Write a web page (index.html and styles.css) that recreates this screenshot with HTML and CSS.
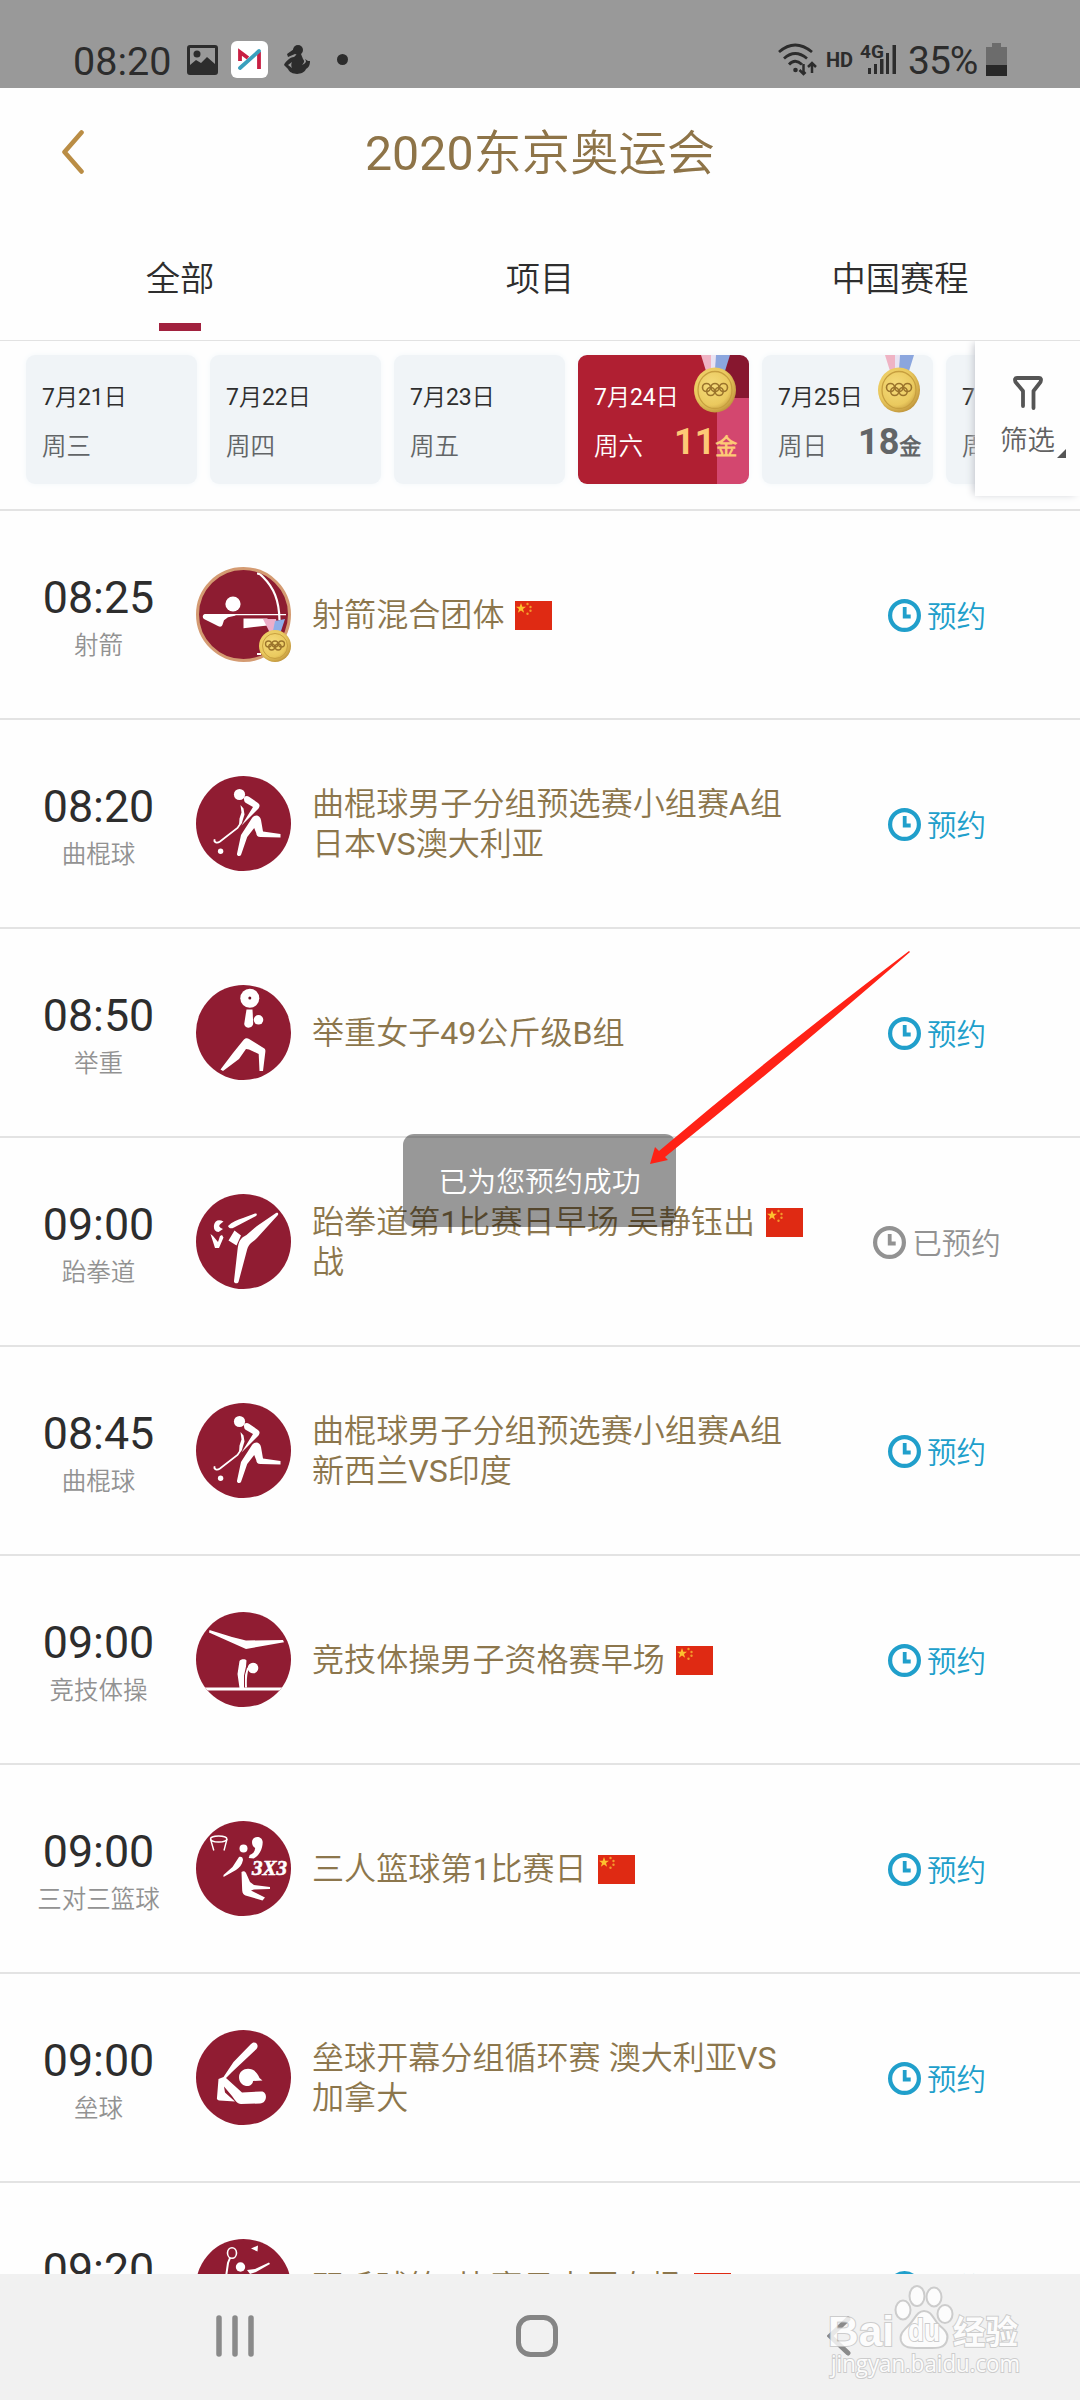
FILE: index.html
```html
<!DOCTYPE html>
<html lang="zh-CN">
<head>
<meta charset="utf-8">
<title>2020东京奥运会</title>
<link rel="stylesheet" href="styles.css">
</head>
<body>
<svg class="defs" width="0" height="0" aria-hidden="true">
  <defs>
    <radialGradient id="gold" cx=".42" cy=".4" r=".62">
      <stop offset="0" stop-color="#f6dc7c"/><stop offset=".7" stop-color="#eac95e"/><stop offset="1" stop-color="#c0953c"/>
    </radialGradient>
    <clipPath id="disc"><circle cx="47.5" cy="47.5" r="47.5"/></clipPath>
    <symbol id="medal" viewBox="0 0 42 58">
      <path d="M7 0h12l2 16h-9z" fill="#efb3c4"/><path d="M21 0h15l-5 16h-11z" fill="#8ba6de"/><path d="M17 0h5l-1 15h-4z" fill="#e9e3f2"/>
      <ellipse cx="21" cy="35" rx="21" ry="22.5" fill="url(#gold)"/>
      <ellipse cx="21" cy="35" rx="17" ry="18.5" fill="none" stroke="#c79f3f" stroke-width="1.3"/>
      <g fill="none" stroke="#9b742c" stroke-width="1.6"><circle cx="12.5" cy="32.5" r="4"/><circle cx="21" cy="32.5" r="4"/><circle cx="29.5" cy="32.5" r="4"/><circle cx="16.7" cy="36.5" r="4"/><circle cx="25.2" cy="36.5" r="4"/></g>
    </symbol>
    <symbol id="flag" viewBox="0 0 37 29">
      <path d="M0 0h37v29H0z" fill="#df2a13"/>
      <path d="M6 2l1.3 3.7h3.7L8 8l1.1 3.8L6 9.5l-3.1 2.3L4 8 1 5.700h3.700z" fill="#fdc02f"/>
      <g fill="#f39a2c"><circle cx="12.500" cy="3" r="1.200"/><circle cx="15.500" cy="6" r="1.200"/><circle cx="15.500" cy="9.800" r="1.200"/><circle cx="12.500" cy="12.800" r="1.200"/></g>
    </symbol>
    <symbol id="clock" viewBox="0 0 33 33">
      <circle cx="16.500" cy="16.500" r="14.400" fill="none" stroke="currentColor" stroke-width="4.200"/>
      <path d="M16.700 8v9.500h6" fill="none" stroke="currentColor" stroke-width="3.800"/>
    </symbol>
    <symbol id="archery" viewBox="0 0 95 95">
      <circle cx="47.500" cy="47.500" r="46" fill="#8d1c31" stroke="#d49b72" stroke-width="3"/>
      <circle cx="37" cy="37" r="7.600" fill="#fff"/>
      <path d="M9 47h33l-3 1.800-7 1.500-4 3-1.500 4.500c-.6 2-2.500 2.200-4 1.500L8 52c-2-1.500-1.500-4.500 1-5zM47.500 51.500h24v7l-24 2.800z" fill="#fff"/>
      <path d="M40 47.700h50" stroke="#fff" stroke-width="1.300"/>
      <path d="M61 6.500c2.500 0 4 1 6 3.500C78 21 83 33 83.500 53M61 87h4" fill="none" stroke="#fff" stroke-width="2.200"/>
      <path d="M67 52h13l2 12-8 2z" fill="#edaec9"/><path d="M79 54l10-2-4 12h-8z" fill="#8eaee8"/>
      <circle cx="79" cy="79" r="16" fill="url(#gold)"/><circle cx="79" cy="79" r="12.500" fill="none" stroke="#c79f3f"/>
      <g fill="none" stroke="#9b742c" stroke-width="1.300"><circle cx="72.500" cy="77" r="3"/><circle cx="79" cy="77" r="3"/><circle cx="85.500" cy="77" r="3"/><circle cx="75.700" cy="80" r="3"/><circle cx="82.200" cy="80" r="3"/></g>
    </symbol>
    <symbol id="hockey" viewBox="0 0 95 95">
      <circle cx="47.500" cy="47.500" r="47.500" fill="#901c32"/>
      <g fill="#fff"><circle cx="43.500" cy="18.500" r="5.600"/><circle cx="24.600" cy="75.300" r="2.700"/>
      <path d="M48 22.500c0-2.500 3-3 5-1.800l9 6.300c2 1.500 2 3.500.5 5.500L49 46l-3.500 3.500L57 31l-7-4c-1.600-1-2-2.500-2-4.500z"/>
      <path d="M44.500 29l3 3.500 1 6-2.500 8-3 3 .5-7 2-6z"/>
      <path d="M56 42c3-4 8-3 9 2l2 11.500 17.500 2.500v3.500l-20-.5c-3 0-4-1.500-4.300-4l-2-5-7 9L45 79c-1 1.800-4.500 1-4-1.200L45 59z"/></g>
      <path d="M45.500 46l-4 6L24 65.500c-3 2.200-6.500 1-5.300-2.200" fill="none" stroke="#fff" stroke-width="1.800"/>
    </symbol>
    <symbol id="weight" viewBox="0 0 95 95">
      <circle cx="47.500" cy="47.500" r="47.500" fill="#901c32"/>
      <g fill="#fff"><circle cx="53.800" cy="13.300" r="9.500"/><circle cx="62.500" cy="34.800" r="4.800"/>
      <path d="M50.500 24.500h6l.7 13.500c0 6-8.500 6-9 1z"/>
      <path d="M47.500 55c2-2.500 4-2 6-.7l14.500 9c1.500 1 1.500 2 1.300 4L67 86h-3.500l-.8-17-9.700-4.500-3-.5L43 74 27 86l-2.500-1.500L37 68z"/></g>
      <circle cx="53.800" cy="13" r="1.500" fill="#6d1025"/>
    </symbol>
    <symbol id="taekwondo" viewBox="0 0 95 95">
      <circle cx="47.500" cy="47.500" r="47.500" fill="#901c32"/>
      <path d="M18 31c1-5 5-6 9.500-3.500l-2.500 2c-3 2.500-2 4 2 5.500l-4.500 3c-4-.5-5-3-4.500-7zM32 32c4-4 9-6 15-8l12-4.500c2-.5 2.500 1.500 1 2.500L38 33.500c-3 1.500-5 1-6-1.500zM14.500 40l2.500 2 5 6 2-6 2-1 1.500 2.500L23 54h-4zM38.500 36.500l6.500 5-4.500 10-8-5zM80 19c2-1 3 1 1.500 2.500L61 44c-4 4-8 5-10 12l-8.500 32c-.7 2-5 1.500-4.500-1l3.500-31c1-9 3-12 9-15L61 32z" fill="#fff"/>
    </symbol>
    <symbol id="gymnastics" viewBox="0 0 95 95">
      <circle cx="47.500" cy="47.500" r="47.500" fill="#901c32"/>
      <g clip-path="url(#disc)" fill="#fff"><path d="M13.500 18L36 25l14 3.500 37-.5 1 2.300L50 37 13 20.500zM43.500 49c1-2 6-2.500 7-.5l-.5 6-2 9v12.500h-4.500L41.500 62zM49 63l2-7 2-1c-2 7-2.500 14-2 20.500h-2z"/><circle cx="57" cy="56" r="5.300"/><path d="M0 75.500h95v3H0z"/></g>
    </symbol>
    <symbol id="basketball" viewBox="0 0 95 95">
      <circle cx="47.500" cy="47.500" r="47.500" fill="#901c32"/>
      <g fill="none" stroke="#fff" stroke-width="1.400"><ellipse cx="22.700" cy="18" rx="8.200" ry="3"/><path d="M14.500 18l3.300 11.500M31 18l-3 11.500"/></g>
      <g fill="#fff"><circle cx="47.500" cy="27.500" r="4"/><path d="M56 21c0-6 10-7 10.700 0 0 8-4.500 14.500-9 16.500l-5-.5 1-3c3-1 5-3 5.500-7-2-1-3.200-3-3.200-6zM43 36c2-1 4 0 4 3-1 5-4 8-7 10l-12.500 7v-2l9-8zM45.500 51c1.500-1 3.500-1 4.500 1l4 9 4 3 16 2v2l-16 .5-3 1 14 7-2.500 3-17-5c-2-1-3-2-3.300-5z"/></g>
      <text x="56" y="54" class="threes" textLength="35" lengthAdjust="spacingAndGlyphs">3X3</text>
    </symbol>
    <symbol id="softball" viewBox="0 0 95 95">
      <circle cx="47.500" cy="47.500" r="47.500" fill="#901c32"/>
      <path d="M54.500 14.500c4-5 9.500 0 6 4.500L36 42l-6 6 16 14.500 19-1c7-.5 6.500 12-1 12l-19 .5c-4 0-6-4-9-8l-8-9.500 1 6 10 9-15.500-1c-2 0-3-1.500-2.500-3L22.500 49l5-2 10-15z" fill="#fff"/>
      <path d="M43 47c.5-10 16-12 20.500 1l3 2.500-9.500.5c0 3-3 5.500-7 5-4-.8-7-4-7-9z" fill="#fff"/>
    </symbol>
    <symbol id="badminton" viewBox="0 0 95 95">
      <circle cx="47.500" cy="47.500" r="47.500" fill="#901c32"/>
      <path d="M34 19l-2 5-2 14" fill="none" stroke="#fff" stroke-width="2"/><ellipse cx="36" cy="14" rx="4.500" ry="5.300" fill="none" stroke="#fff" stroke-width="1.600"/>
      <path d="M55 9.500l7-3-.5 6zM51 31l8-1 14-6.500 1 1.500-14 8-6 2z" fill="#fff"/><circle cx="44.500" cy="28" r="4.700" fill="#fff"/>
    </symbol>
  </defs>
</svg>

<div class="screen">
  <div class="status">
    <div class="status-left">
      <span class="clock-text">08:20</span>
      <svg class="ic-photo" viewBox="0 0 31 30"><path fill-rule="evenodd" d="M3 0h25q3 0 3 3v24q0 3-3 3H3q-3 0-3-3V3q0-3 3-3zm0 3v17l6-5 5 3 6-6 8 7V3z" fill="#2c2c2c"/><circle cx="10" cy="9" r="3.500" fill="#2c2c2c"/></svg>
      <svg class="ic-app" viewBox="0 0 37 37"><rect width="37" height="37" rx="6" fill="#fff"/><path d="M9 20V11l8 6M28 28V11" fill="none" stroke="#c81f43" stroke-width="3.800"/><path d="M9 27L28 10" stroke="#3aa0bd" stroke-width="3.800" stroke-linecap="round"/></svg>
      <svg class="ic-swan" viewBox="0 0 26 29"><circle cx="14" cy="5" r="5" fill="#2c2c2c"/><path d="M10 4L3 9l1 3 7-3zM13 9h4l2 5c2 2 1 4-1 6 3-1 4-3 4-4l-1-2 3 2 2 0c0 5-2 7-4 8-3 7-16 6-18 0l-4-4c1-3 6-8 10-8zM4 20l4 3c-1-2-1-4 0-6z" fill="#2c2c2c"/></svg>
      <span class="dot"></span>
    </div>
    <div class="status-right">
      <svg class="ic-wifi" viewBox="0 0 36 33"><g fill="none" stroke="#2c2c2c" stroke-width="2.800"><path d="M1 9Q17-5 34 9M6 15.500q11-10 23 0M11 21.500q6-6.500 13 0"/></g><circle cx="17.500" cy="27" r="2.300" fill="#2c2c2c"/><path d="M28 21v9m-4-3l4 4 2-2M36.500 30v-9m-4 3l4-4 4 4" fill="none" stroke="#2c2c2c" stroke-width="2.500" transform="translate(-2.500)"/></svg>
      <span class="hd">HD</span>
      <span class="signal"><b>4G</b><svg viewBox="0 0 28 30"><path d="M0 23h3v6H0zM6 19h3v10H6zM12 14h3.500v15H12zM18 8h3v21h-3zM24.500 0H28v29h-3.500z" fill="#2c2c2c"/></svg></span>
      <span class="percent">35%</span>
      <svg class="ic-battery" viewBox="0 0 21 33"><path d="M6 0h9v4h6v18H0V4h6z" fill="#6c6c6c"/><path d="M0 22h21v11H0z" fill="#282828"/></svg>
    </div>
  </div>

  <header class="header">
    <svg class="back" viewBox="0 0 22 44"><path d="M19.500 2.500L2.500 22l17 19.500" fill="none" stroke="#ba8d45" stroke-width="4.600" stroke-linecap="round" stroke-linejoin="round"/></svg>
    <h1>2020东京奥运会</h1>
  </header>

  <nav class="tabs"><a class="active">全部</a><a>项目</a><a>中国赛程</a></nav>

  <section class="dates">
    <div class="strip">
      <div class="day"><p>7月21日</p><div class="week"><span>周三</span></div></div>
      <div class="day"><p>7月22日</p><div class="week"><span>周四</span></div></div>
      <div class="day"><p>7月23日</p><div class="week"><span>周五</span></div></div>
      <div class="day selected"><svg class="medal"><use href="#medal"/></svg><p>7月24日</p><div class="week"><span>周六</span><b>11<small>金</small></b></div></div>
      <div class="day"><svg class="medal"><use href="#medal"/></svg><p>7月25日</p><div class="week"><span>周日</span><b>18<small>金</small></b></div></div>
      <div class="day"><p>7月26日</p><div class="week"><span>周一</span></div></div>
    </div>
    <div class="filter">
      <svg class="funnel" viewBox="0 0 30 34"><path d="M10 30V15L2.500 6Q1 2 4 2h22q3 0 1.500 4L20.500 15v17" fill="none" stroke="#555" stroke-width="3.800" stroke-linecap="round" stroke-linejoin="round"/></svg>
      <span>筛选</span><i></i>
    </div>
  </section>

  <main class="list">
    <div class="row"><div class="time"><b>08:25</b><span>射箭</span></div><svg class="sport"><use href="#archery"/></svg><div class="title">射箭混合团体<svg class="flag"><use href="#flag"/></svg></div><div class="book"><svg><use href="#clock"/></svg><span>预约</span></div></div>
    <div class="row"><div class="time"><b>08:20</b><span>曲棍球</span></div><svg class="sport"><use href="#hockey"/></svg><div class="title">曲棍球男子分组预选赛小组赛A组<br>日本VS澳大利亚</div><div class="book"><svg><use href="#clock"/></svg><span>预约</span></div></div>
    <div class="row"><div class="time"><b>08:50</b><span>举重</span></div><svg class="sport"><use href="#weight"/></svg><div class="title">举重女子49公斤级B组</div><div class="book"><svg><use href="#clock"/></svg><span>预约</span></div></div>
    <div class="row"><div class="time"><b>09:00</b><span>跆拳道</span></div><svg class="sport"><use href="#taekwondo"/></svg><div class="title">跆拳道第1比赛日早场 吴静钰出<svg class="flag"><use href="#flag"/></svg><br>战</div><div class="book booked"><svg><use href="#clock"/></svg><span>已预约</span></div></div>
    <div class="row"><div class="time"><b>08:45</b><span>曲棍球</span></div><svg class="sport"><use href="#hockey"/></svg><div class="title">曲棍球男子分组预选赛小组赛A组<br>新西兰VS印度</div><div class="book"><svg><use href="#clock"/></svg><span>预约</span></div></div>
    <div class="row"><div class="time"><b>09:00</b><span>竞技体操</span></div><svg class="sport"><use href="#gymnastics"/></svg><div class="title">竞技体操男子资格赛早场<svg class="flag"><use href="#flag"/></svg></div><div class="book"><svg><use href="#clock"/></svg><span>预约</span></div></div>
    <div class="row"><div class="time"><b>09:00</b><span>三对三篮球</span></div><svg class="sport"><use href="#basketball"/></svg><div class="title">三人篮球第1比赛日<svg class="flag"><use href="#flag"/></svg></div><div class="book"><svg><use href="#clock"/></svg><span>预约</span></div></div>
    <div class="row"><div class="time"><b>09:00</b><span>垒球</span></div><svg class="sport"><use href="#softball"/></svg><div class="title">垒球开幕分组循环赛 澳大利亚VS<br>加拿大</div><div class="book"><svg><use href="#clock"/></svg><span>预约</span></div></div>
    <div class="row"><div class="time"><b>09:20</b><span>羽毛球</span></div><svg class="sport"><use href="#badminton"/></svg><div class="title">羽毛球第1比赛日中国专场<svg class="flag"><use href="#flag"/></svg></div><div class="book"><svg><use href="#clock"/></svg><span>预约</span></div></div>
  </main>

  <footer class="navbar">
    <svg viewBox="0 0 40 42"><path d="M4 3v36M20 3v36M36 3v36" stroke="#8a8a8a" stroke-width="5.500" stroke-linecap="round"/></svg>
    <svg class="home" viewBox="0 0 42 42"><rect x="2.500" y="2.500" width="37" height="37" rx="12" fill="none" stroke="#858585" stroke-width="5"/></svg>
    <svg class="nav-back" viewBox="0 0 24 40"><path d="M21 3L3 20l18 17" fill="none" stroke="#8a8a8a" stroke-width="5"  stroke-linecap="round"/></svg>
  </footer>

  <div class="toast">已为您预约成功</div>
  <svg class="arrow" viewBox="0 0 264 216"><path d="M2 214L7 197l4 4Q130 100 261 1l1 1Q140 108 17 207l3 3z" fill="#ff2216"/></svg>

  <svg class="watermark" viewBox="0 0 210 110">
    <g fill="#fff" stroke="#c4c4c4" stroke-width="2">
      <text class="wm-brand" x="7" y="72" textLength="66" lengthAdjust="spacingAndGlyphs">Bai</text>
      <ellipse cx="82" cy="36" rx="7.500" ry="9.500"/><ellipse cx="96" cy="22" rx="7.500" ry="10"/><ellipse cx="113" cy="23" rx="7.500" ry="9.500"/><ellipse cx="124" cy="40" rx="7.500" ry="9"/>
      <path d="M103 37c8 0 9 8 15 14 6 5 10 9 8 15-2 9-11 8-23 8s-20 1-23-7c-2-7 3-11 8-16 6-6 8-14 15-14z"/>
      <text class="wm-du" x="87" y="67" textLength="32" lengthAdjust="spacingAndGlyphs">du</text>
      <text class="wm-cn" x="132" y="70" textLength="65" lengthAdjust="spacingAndGlyphs">经验</text>
      <text class="wm-url" x="10" y="98" textLength="189" lengthAdjust="spacingAndGlyphs">jingyan.baidu.com</text>
    </g>
  </svg>
</div>
</body>
</html>
```
FILE: styles.css
```css
* { box-sizing: border-box; margin: 0; padding: 0; }
body { background: #fefefe; font-family: Roboto, "Noto Sans CJK SC DemiLight", "Noto Sans CJK SC", sans-serif; color: #2e2e2e; }
svg { display: block; flex: none; }
.defs { position: absolute; }
.screen { position: relative; width: 1080px; height: 2400px; overflow: hidden; display: flex; flex-direction: column; background: #fefefe; }

.status { flex: none; height: 88px; background: #999; display: flex; justify-content: space-between; padding: 31px 73px 0; color: #2c2c2c; }
.status-left, .status-right { display: flex; align-items: center; height: 57px; }
.clock-text { width: 114px; font-size: 39.500px; line-height: 57px; padding-top: 4px; }
.ic-photo { width: 31px; height: 30px; }
.ic-app { width: 37px; height: 37px; margin-left: 13px; }
.ic-swan { width: 26px; height: 29px; margin-left: 16px; }
.dot { width: 11px; height: 11px; border-radius: 50%; background: #2c2c2c; margin-left: 27px; }
.ic-wifi { width: 38px; height: 33px; overflow: visible; }
.hd { font-size: 20px; font-weight: 700; margin-left: 11px; width: 34px; }
.signal { position: relative; width: 36px; height: 30px; }
.signal b { position: absolute; left: 0; top: -2px; font-size: 19px; line-height: 18px; font-weight: 700; }
.signal svg { width: 28px; height: 30px; margin-left: 8px; }
.percent { font-size: 39px; line-height: 57px; margin-left: 12px; width: 78px; padding-top: 4px; letter-spacing: -1px; }
.ic-battery { width: 21px; height: 33px; }

.header { flex: none; height: 128px; display: grid; grid-template-columns: 84px 1fr 84px; align-items: center; }
.back { width: 22px; height: 44px; margin-left: 62px; }
.header h1 { font-size: 48.300px; font-weight: 400; text-align: center; color: #8e7448; line-height: 60px; padding-top: 3px; }

.tabs { flex: none; height: 125px; display: grid; grid-template-columns: repeat(3, 1fr); border-bottom: 1px solid #e2e2e2; }
.tabs a { display: flex; flex-direction: column; align-items: center; font-size: 34.300px; line-height: 126px; }
.active::after { content: ""; width: 42px; height: 8px; background: #a1213e; margin-top: -19px; }

.dates { flex: none; height: 170px; display: flex; overflow: hidden; border-bottom: 2px solid #e3e3e3; }
.strip { width: 975px; display: flex; gap: 13px; padding: 14px 0 0 26px; overflow: hidden; }
.day { position: relative; flex: none; width: 171px; height: 129px; padding: 26px 0 0 16px; background: #f0f4f7; border-radius: 9px; box-shadow: 0 0 6px #f3f8fb; }
.day p { font-size: 23px; line-height: 34px; }
.week { display: flex; align-items: center; height: 34px; margin-top: 15px; font-size: 24.500px; line-height: 34px; color: #626567; }
.week span { width: 80px; }
.week b { font-size: 36px; line-height: 34px; margin-top: -6px; white-space: nowrap; }
.week small { font-size: 22px; }
.selected { color: #fff; background: linear-gradient(#d3476f, #d3476f) 139px 43px / 32px 86px no-repeat, linear-gradient(#87172f, #87172f) 139px 0 / 32px 43px no-repeat, #b01f32; }
.selected .week { color: #fff; }
.selected b { color: #fdc976; }
.medal { position: absolute; left: 116px; top: 0; width: 42px; height: 58px; }
.filter { position: relative; flex: 1; height: 155px; background: #fefefe; box-shadow: -3px 0 8px -2px #bfc2c9; display: flex; flex-direction: column; align-items: center; padding: 35px 0 0; color: #626262; }
.funnel { width: 30px; height: 34px; }
.filter span { font-size: 27.500px; line-height: 36px; margin-top: 13px; }
.filter i { position: absolute; left: 82px; top: 108px; border-left: 9px solid transparent; border-bottom: 9px solid #555; }

.list { flex: none; height: 1763px; overflow: hidden; }
.row { height: 209px; border-bottom: 2px solid #e3e3e3; display: grid; grid-template-columns: 196px 95px 1fr 250px; align-items: center; padding-right: 18px; }
.time { display: flex; flex-direction: column; align-items: center; padding: 6px 0 0 1px; }
.time b { font-size: 44.800px; line-height: 54px; font-weight: 400; color: #2d2d2d; }
.time span { font-size: 24.500px; line-height: 36px; margin-top: 3px; color: #929292; }
.sport { width: 95px; height: 95px; }
.title { padding: 1px 0 0 21px; font-size: 32.100px; line-height: 40px; color: #8c764c; white-space: nowrap; }
.flag { display: inline-block; width: 37px; height: 29px; margin-left: 11px; vertical-align: -4px; }
.book { display: flex; justify-content: center; align-items: center; gap: 6px; padding-top: 1px; font-size: 29.500px; line-height: 36px; color: #209fcb; }
.book span { padding-top: 3px; }
.book svg { width: 33px; height: 33px; }
.booked { color: #929292; }
.threes { font: italic 700 20px "Liberation Serif", serif; fill: #fff; stroke: #fff; stroke-width: .6px; }

.navbar { position: relative; flex: 1; background: #f1f1f1; display: flex; align-items: center; padding: 0 0 2px 215px; }
.navbar svg { width: 40px; height: 42px; }
.navbar .home { width: 42px; margin-left: 261px; }
.navbar .nav-back { width: 24px; height: 40px; margin-left: 269px; }

.toast { position: absolute; left: 403px; top: 1134px; width: 273px; height: 93px; border-radius: 11px; background: rgba(0,0,0,.4); color: #fff; font-size: 28.900px; line-height: 96px; text-align: center; }
.arrow { position: absolute; left: 648px; top: 950px; width: 264px; height: 216px; }
.watermark { position: absolute; left: 821px; top: 2274px; width: 210px; height: 110px; opacity: .8; }
.watermark text { paint-order: stroke; }
.wm-brand { font: 700 42px "Liberation Sans", sans-serif; }
.wm-du { font: 700 31px "Liberation Sans", sans-serif; }
.wm-cn { font: 700 33px "Noto Sans CJK SC", sans-serif; }
.wm-url { font: 400 24px "Open Sans", sans-serif; }
```
